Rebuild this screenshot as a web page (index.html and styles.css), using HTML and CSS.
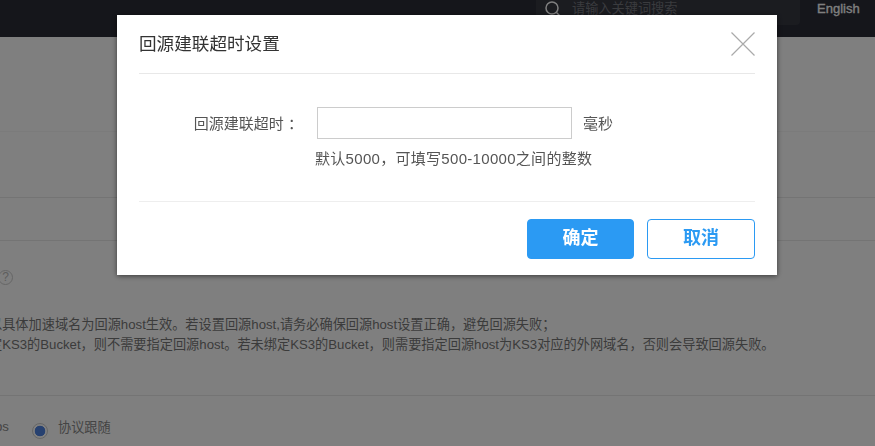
FILE: index.html
```html
<!DOCTYPE html>
<html lang="zh-CN">
<head>
<meta charset="utf-8">
<title>回源建联超时设置</title>
<link rel="stylesheet" href="styles.css">
</head>
<body>
<div class="page">
  <header class="topbar">
    <div class="search">
      <svg class="search-icon" width="18" height="18" viewBox="0 0 18 18" aria-hidden="true"><circle cx="8" cy="8" r="6" fill="none" stroke="#fff" stroke-width="1.5"/><path d="M12.5 12.5L16.5 16.5" stroke="#fff" stroke-width="1.5"/></svg>
      <span class="placeholder">请输入关键词搜索</span>
    </div>
    <span class="lang">English</span>
  </header>
  <section class="sec sec-a"></section>
  <section class="sec sec-b"></section>
  <section class="sec sec-c"></section>
  <section class="sec sec-d">
    <span class="help">?</span>
    <div class="notes">
      <p>以具体加速域名为回源host生效。若设置回源host,请务必确保回源host设置正确，避免回源失败；</p>
      <p>定KS3的Bucket，则不需要指定回源host。若未绑定KS3的Bucket，则需要指定回源host为KS3对应的外网域名，否则会导致回源失败。</p>
    </div>
  </section>
  <section class="sec-e">
    <span class="opt-cut">ps</span>
    <span class="radio"></span>
    <span class="opt">协议跟随</span>
  </section>
</div>
<div class="overlay">
  <div class="modal">
    <div class="modal-head">
      <h2 class="modal-title">回源建联超时设置</h2>
      <svg class="close" width="24" height="24" viewBox="0 0 24 24" aria-hidden="true"><path d="M0.5 0.5L23.5 23.5M23.5 0.5L0.5 23.5" stroke="#aaa" stroke-width="1.2" fill="none"/></svg>
    </div>
    <div class="modal-body">
      <div class="field">
        <label class="field-label">回源建联超时 ：</label>
        <input class="field-input" type="text">
        <span class="unit">毫秒</span>
      </div>
      <p class="hint">默认5000，可填写500-10000之间的整数</p>
    </div>
    <div class="modal-foot">
      <button class="btn btn-primary">确定</button>
      <button class="btn btn-ghost">取消</button>
    </div>
  </div>
</div>
</body>
</html>
```

FILE: styles.css
```css
* { box-sizing: border-box; }
html, body { margin: 0; height: 100%; overflow: hidden; }
body {
  background: #fff;
  font-family: "Liberation Sans", "Noto Sans CJK SC", sans-serif;
  color: #333;
}
.page { width: 875px; height: 446px; overflow: hidden; }
.topbar {
  height: 37px;
  background: #2a2c36;
  display: flex;
  align-items: flex-start;
  padding-left: 536px;
}
.search {
  width: 264px;
  height: 25px;
  background: #363841;
  border-radius: 0 0 4px 4px;
  display: flex;
  align-items: flex-start;
  padding-left: 8px;
  overflow: hidden;
}
.search-icon { flex: none; margin-top: 0; }
.placeholder { margin: 0 0 0 10px; font-size: 13.2px; line-height: 18px; color: #75767d; }
.lang { margin: 0 0 0 17px; font-size: 13px; line-height: 18px; font-weight: 400; color: #fff; -webkit-text-stroke: .3px #fff; }
.sec { border-bottom: 1px solid #e8e8e8; }
.sec-a { height: 95px; border-bottom-color: #f7f7f7; }
.sec-b { height: 66px; }
.sec-c { height: 43px; }
.sec-d { height: 155px; position: relative; }
.help {
  position: absolute;
  left: -2px;
  top: 29px;
  width: 15px;
  height: 15px;
  border: 1px solid #ccc;
  border-radius: 50%;
  font-size: 12px;
  line-height: 13px;
  text-align: center;
  color: #bbb;
}
.notes {
  padding-top: 74px;
  margin-left: -11px;
  width: 900px;
  font-size: 13.2px;
  line-height: 20px;
  color: #777;
}
.notes p { margin: 0; white-space: nowrap; }
.sec-e { display: flex; align-items: center; height: 50px; padding-top: 11px; font-size: 13.2px; color: #888; }
.opt-cut { width: 32px; margin-left: -5px; margin-right: 5px; flex: none; }
.radio {
  width: 16px;
  height: 16px;
  border-radius: 50%;
  background: radial-gradient(circle, #4f82e0 0 5px, #fff 5.6px);
  border: 1px solid #ccc;
  margin-top: 8px;
}
.opt { margin-left: 10px; }
.overlay {
  position: fixed;
  inset: 0;
  background: rgba(0, 0, 0, .5);
  padding: 15px 0 0 117px;
}
.modal {
  width: 660px;
  height: 260px;
  background: #fff;
  box-shadow: 0 1px 5px rgba(0, 0, 0, .55);
  padding: 0 22px;
}
.modal-head {
  height: 59px;
  border-bottom: 1px solid #e8e8e8;
  display: flex;
  align-items: center;
  justify-content: space-between;
}
.modal-title { margin: -3px 0 0; font-size: 17.6px; font-weight: 400; color: #333; }
.close { margin-top: 0; }
.modal-body { height: 128px; border-bottom: 1px solid #eee; padding-top: 33px; }
.field { display: flex; align-items: center; height: 32px; }
.field-label { width: 164px; margin-top: -1px; font-size: 15px; color: #555; text-align: right; white-space: nowrap; }
.field-input { width: 255px; height: 32px; margin-left: 14px; border: 1px solid #ccc; background: #fff; padding: 0 8px; outline: none; }
.unit { margin: -2px 0 0 11px; font-size: 15px; color: #555; }
.hint { margin: 10px 0 0 176px; font-size: 15px; line-height: 20px; letter-spacing: .3px; color: #555; }
.modal-foot { display: flex; justify-content: flex-end; gap: 13px; padding-top: 17px; }
.btn {
  height: 40px;
  border-radius: 4px;
  font-family: inherit;
  font-size: 18px;
  line-height: 20px;
  font-weight: 700;
  padding: 0 0 2px;
  cursor: pointer;
}
.btn-primary { width: 107px; background: #2b9af3; border: 1px solid #2b9af3; color: #fff; }
.btn-ghost { width: 108px; background: #fff; border: 1px solid #2b9af3; color: #2b9af3; }
```
